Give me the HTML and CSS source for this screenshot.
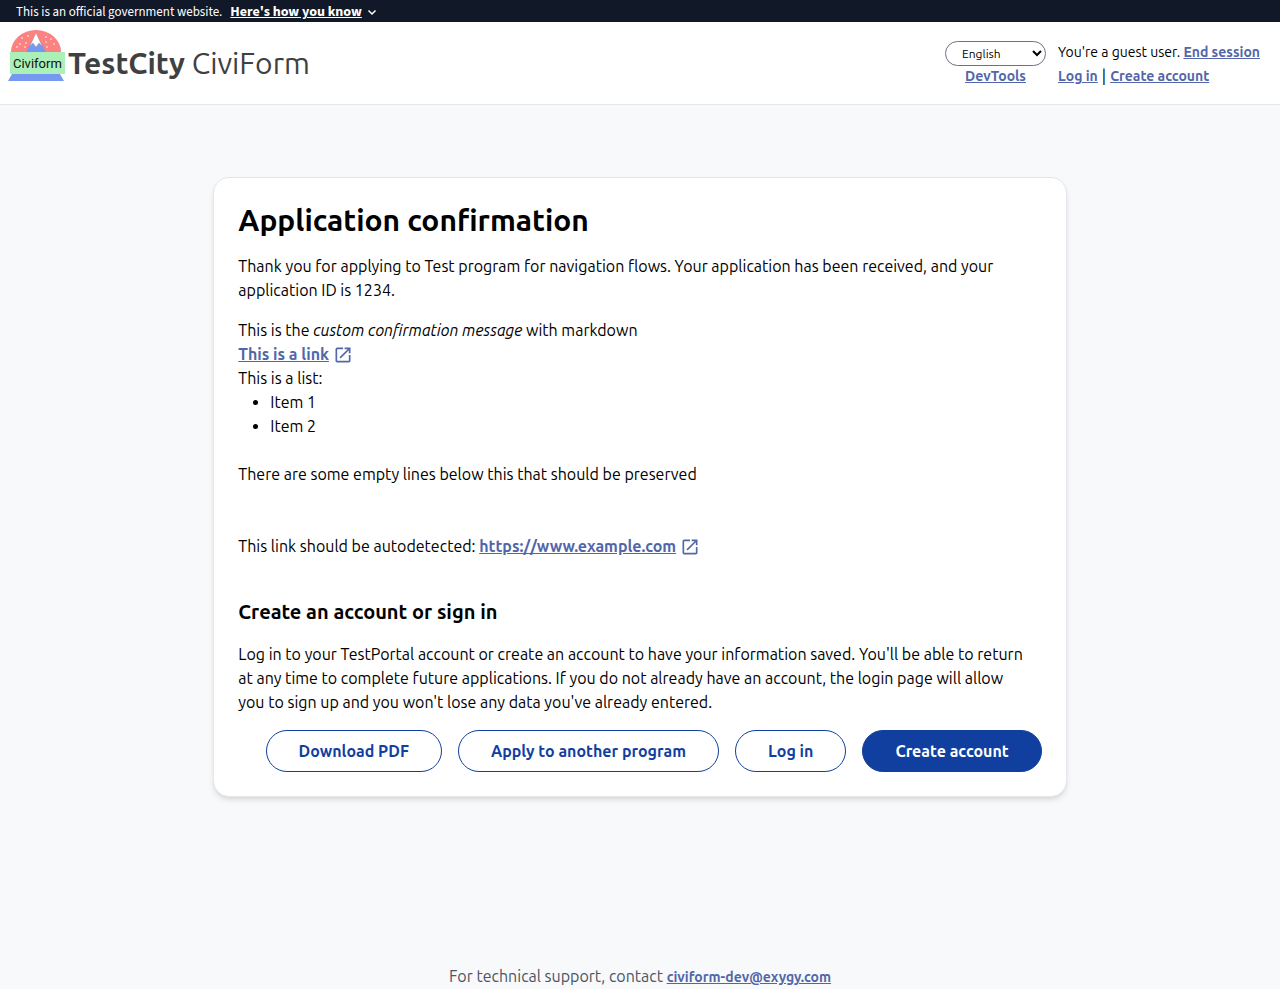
FILE: index.html
```html
<!DOCTYPE html>
<html lang="en">
<head>
<meta charset="utf-8">
<meta name="viewport" content="width=device-width, initial-scale=1">
<title>Application confirmation</title>
<link rel="stylesheet" href="styles.css">
</head>
<body>
<section class="banner" aria-label="Official government website">
  <span>This is an official government website.</span>
  <button class="banner-toggle" type="button"><span class="banner-label">Here's how you know</span><svg class="chevron" viewBox="0 0 12 12" aria-hidden="true"><path d="M2.500 4.500 6 8l3.500-3.500" fill="none" stroke="currentColor" stroke-width="1.500"/></svg></button>
</section>
<header class="header">
  <a class="brand" href="#">
    <svg class="logo" viewBox="0 0 58 52" role="img" aria-label="Civiform logo">
      <path d="M3 22a25 22 0 0 1 50 0z" fill="#fc8181"/>
      <path d="M18 22 28 4l10 18z" fill="#7599f1"/>
      <path d="m22 16 6-13 6 13-3-3-3 4-3-4z" fill="#fff" stroke="#999" stroke-width=".4"/>
      <g fill="#fff"><circle cx="20" cy="6" r=".8"/><circle cx="14" cy="8" r=".8"/><circle cx="18" cy="13" r=".8"/><circle cx="12" cy="14" r=".8"/><circle cx="9" cy="17" r=".8"/><circle cx="17" cy="17" r=".8"/><circle cx="38" cy="7" r=".8"/><circle cx="43" cy="9" r=".8"/><circle cx="38" cy="12" r=".8"/><circle cx="46" cy="14" r=".8"/><circle cx="39" cy="17" r=".8"/></g>
      <path d="M4 44h48l4 7H0z" fill="#7599f1"/>
      <path d="M2 22h55v22H2z" fill="#aaf0b8"/>
      <text class="logo-text" x="5" y="38">Civiform</text>
    </svg>
    <span class="brand-name"><strong>TestCity</strong> CiviForm</span>
  </a>
  <nav class="account" aria-label="Account">
    <div class="tools">
      <select class="language" aria-label="Language"><option>English</option></select>
      <a class="link" href="#">DevTools</a>
    </div>
    <div class="session">
      <div>You're a guest user. <a class="link" href="#">End session</a></div>
      <div class="session-links"><a class="link" href="#">Log in</a><span class="bar">|</span><a class="link" href="#">Create account</a></div>
    </div>
  </nav>
</header>
<main class="main">
  <article class="card">
    <h1 class="title">Application confirmation</h1>
    <p class="para">Thank you for applying to Test program for navigation flows. Your application has been received, and your application ID is 1234.</p>
    <div class="message">
      <p>This is the <em>custom confirmation message</em> with markdown</p>
      <p><a class="link" href="#">This is a link<svg class="external" viewBox="0 0 24 24" aria-hidden="true"><path d="M19 19H5V5h7V3H5a2 2 0 0 0-2 2v14a2 2 0 0 0 2 2h14c1.100 0 2-.9 2-2v-7h-2v7zM14 3v2h3.590l-9.830 9.830 1.410 1.410L19 6.410V10h2V3h-7z"/></svg></a></p>
      <p>This is a list:</p>
      <ul class="list"><li>Item 1</li><li>Item 2</li></ul>
      <p class="spaced">There are some empty lines below this that should be preserved</p>
      <p>This link should be autodetected: <a class="link" href="#">https://www.example.com<svg class="external" viewBox="0 0 24 24" aria-hidden="true"><path d="M19 19H5V5h7V3H5a2 2 0 0 0-2 2v14a2 2 0 0 0 2 2h14c1.100 0 2-.9 2-2v-7h-2v7zM14 3v2h3.590l-9.830 9.830 1.410 1.410L19 6.410V10h2V3h-7z"/></svg></a></p>
    </div>
    <h2 class="subtitle">Create an account or sign in</h2>
    <p class="para">Log in to your TestPortal account or create an account to have your information saved. You'll be able to return at any time to complete future applications. If you do not already have an account, the login page will allow you to sign up and you won't lose any data you've already entered.</p>
    <div class="actions">
      <button class="button" type="button">Download PDF</button>
      <button class="button" type="button">Apply to another program</button>
      <button class="button" type="button">Log in</button>
      <button class="button primary" type="button">Create account</button>
    </div>
  </article>
</main>
<footer class="footer">For technical support, contact <a class="link" href="#">civiform-dev@exygy.com</a></footer>
</body>
</html>
```
FILE: styles.css
```css
* { box-sizing: border-box; }
body {
  margin: 0;
  min-height: 100vh;
  display: flex;
  flex-direction: column;
  background: #f8f9fb;
  color: #000;
  font: 16px/24px Ubuntu, "Noto Sans", sans-serif;
}
h1, h2, p, ul { margin: 0; }
button { font: inherit; cursor: pointer; }
.link { color: #5266a9; font-weight: 700; text-decoration: underline; }
.banner {
  display: flex;
  align-items: center;
  gap: 8px;
  height: 22px;
  padding: 2px 16px 0;
  background: #111827;
  color: #fff;
  font: 13px/20px "Source Sans Pro", "Source Sans 3", "Noto Sans CJK JP", sans-serif;
}
.banner-toggle { display: flex; align-items: center; gap: 4px; padding: 0; border: 0; background: none; color: inherit; font-size: 14px; font-weight: 700; }
.banner-label { text-decoration: underline; }
.chevron { width: 12px; height: 12px; }
.header {
  display: flex;
  justify-content: space-between;
  align-items: flex-start;
  min-height: 83px;
  padding: 8px 20px 8px 8px;
  background: #fff;
  border-bottom: 1px solid #e5e7eb;
}
.brand { display: flex; align-items: flex-start; gap: 2px; color: #404040; text-decoration: none; }
.logo { width: 58px; height: 52px; }
.logo-text { font: 13px Roboto, sans-serif; fill: #111; }
.brand-name { padding-top: 15px; font-size: 30px; line-height: 36px; }
.account { display: flex; gap: 12px; padding-top: 10px; font-size: 14px; }
.tools { display: flex; flex-direction: column; align-items: center; }
.language {
  width: 101px;
  height: 25px;
  margin-top: 1px;
  padding: 0 0 0 12px;
  border: 1px solid #6b7280;
  border-radius: 16px;
  background: #fff;
  color: #000;
  font: 12px Ubuntu, "Noto Sans", sans-serif;
}
.tools .link { line-height: 20px; }
.session-links { display: flex; gap: 4px; }
.bar { font-size: 16px; }
.main { display: flex; justify-content: center; padding: 72px 0; }
.card {
  width: 66.67%;
  padding: 24px;
  border: 1px solid #e5e7eb;
  border-radius: 16px;
  background: #fff;
  box-shadow: 0 4px 6px -1px rgb(0 0 0 / 10%), 0 2px 4px -1px rgb(0 0 0 / 6%);
}
.title { margin-bottom: 16px; font-size: 30px; line-height: 36px; }
.para { margin-bottom: 16px; padding-right: 16px; }
.external { width: 20px; height: 20px; margin-left: 4px; vertical-align: -5px; fill: currentColor; }
.list { margin-bottom: 24px; padding-left: 32px; }
.spaced { margin-bottom: 48px; }
.subtitle { margin: 40px 0 16px; font-size: 20px; line-height: 28px; }
.actions { display: flex; flex-wrap: wrap; justify-content: flex-end; gap: 16px; }
.button { padding: 8px 32px; border: 1px solid #113f9f; border-radius: 24px; background: #fff; color: #113f9f; font-weight: 700; }
.primary { background: #113f9f; color: #fff; }
.footer { margin-top: auto; color: #4b5563; text-align: center; }
.footer .link { font-size: 14px; }
```
